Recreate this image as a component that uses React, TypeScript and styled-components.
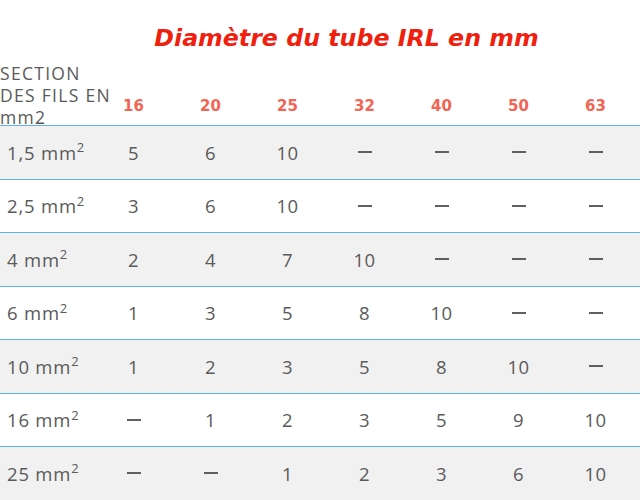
import styled, { createGlobalStyle } from "styled-components";

const tubes = ["16", "20", "25", "32", "40", "50", "63"];

const rows: { section: string; counts: (number | null)[] }[] = [
    { section: "1,5", counts: [5, 6, 10, null, null, null, null] },
    { section: "2,5", counts: [3, 6, 10, null, null, null, null] },
    { section: "4", counts: [2, 4, 7, 10, null, null, null] },
    { section: "6", counts: [1, 3, 5, 8, 10, null, null] },
    { section: "10", counts: [1, 2, 3, 5, 8, 10, null] },
    { section: "16", counts: [null, 1, 2, 3, 5, 9, 10] },
    { section: "25", counts: [null, null, 1, 2, 3, 6, 10] },
];

export default function App() {
    return (
        <>
            <GlobalStyle />
            <PageStyled>
                <TitleStyled>Diamètre du tube IRL en mm</TitleStyled>
                <GridStyled>
                    <HeadLabelStyled>
                        <span>SECTION DES FILS EN mm2</span>
                    </HeadLabelStyled>
                    {tubes.map((t) => (
                        <HeadCellStyled key={t}>{t}</HeadCellStyled>
                    ))}
                    <div />
                    {rows.map((row, i) => (
                        <RowStyled key={row.section} $shaded={i % 2 === 0}>
                            <LabelCellStyled>
                                {row.section} mm<sup>2</sup>
                            </LabelCellStyled>
                            {row.counts.map((c, j) => (
                                <CellStyled key={j}>
                                    {c === null ? <DashStyled aria-label="—" /> : c}
                                </CellStyled>
                            ))}
                            <div />
                        </RowStyled>
                    ))}
                </GridStyled>
            </PageStyled>
        </>
    );
}

// [== STYLES ==]
const GlobalStyle = createGlobalStyle`
    html, body {
        margin: 0;
        padding: 0;
        background: #ffffff;
    }
`;

const PageStyled = styled.div`
    width: 640px;
    height: 500px;
    overflow: hidden;
    font-family: "Open Sans", "Liberation Sans", sans-serif;
    color: #5a5a5a;
`;

const TitleStyled = styled.h1`
    margin: 0;
    padding: 23px 0 0 53px;
    height: 39px;
    text-align: center;
    font-family: "DejaVu Sans", sans-serif;
    font-style: oblique;
    font-weight: bold;
    font-size: 23.7px;
    line-height: 30px;
    color: #f0200f;
`;

const GridStyled = styled.div`
    display: grid;
    grid-template-columns: 95px repeat(7, 77px) 1fr;
`;

const HeadLabelStyled = styled.div`
    height: 63px;
    font-size: 17.5px;
    line-height: 22px;
    padding-top: 0;
    box-sizing: border-box;
    letter-spacing: 1.3px;
    position: relative;
    z-index: 1;

    span {
        display: block;
        width: 122px;
    }
`;

const HeadCellStyled = styled.div`
    display: flex;
    align-items: flex-end;
    justify-content: center;
    padding-bottom: 10px;
    font-family: "DejaVu Sans", sans-serif;
    font-weight: bold;
    font-size: 15px;
    color: #f26454;
`;

const RowStyled = styled.div<{ $shaded: boolean }>`
    grid-column: 1 / -1;
    display: grid;
    grid-template-columns: subgrid;
    height: 53.5px;
    box-sizing: border-box;
    border-top: 1px solid #5cb3e4;
    background: ${({ $shaded }) => ($shaded ? "#f1f1f1" : "#ffffff")};
`;

const LabelCellStyled = styled.div`
    display: flex;
    align-items: center;
    padding-left: 7px;
    font-size: 18.5px;
    letter-spacing: 0.8px;
    white-space: nowrap;

    sup {
        font-size: 13px;
        line-height: 0;
        position: relative;
        top: -5px;
        margin-left: 0;
        letter-spacing: 0;
    }
`;

const CellStyled = styled.div`
    display: flex;
    align-items: center;
    justify-content: center;
    font-size: 18.5px;
    letter-spacing: 0.4px;
`;

const DashStyled = styled.span`
    display: inline-block;
    width: 14px;
    height: 2px;
    background: #5f5f5f;
`;
